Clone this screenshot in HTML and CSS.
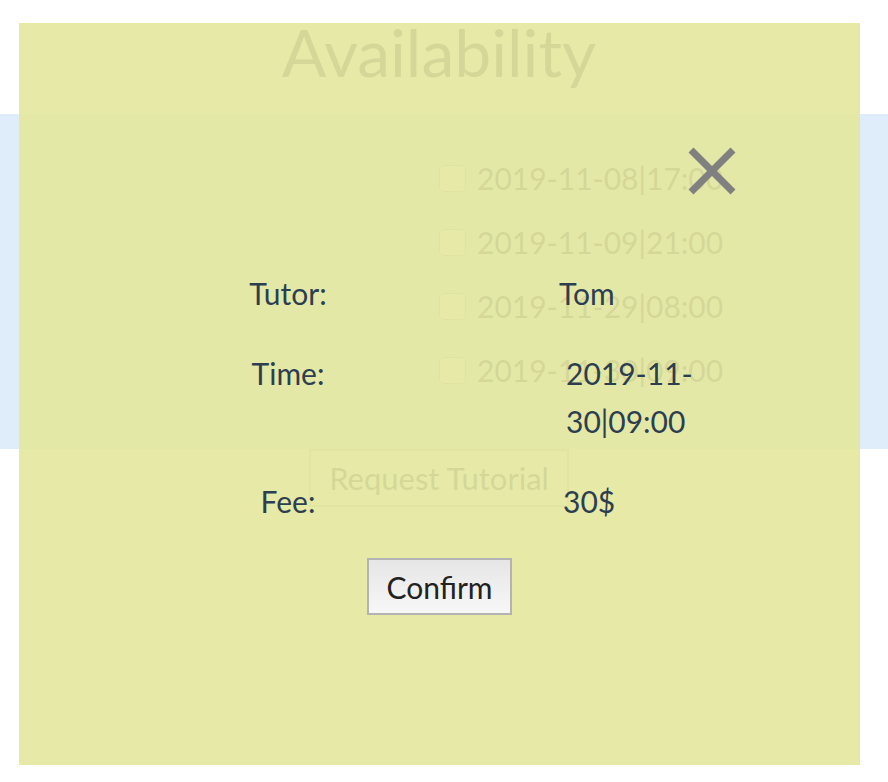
FILE: index.html
```html
<!DOCTYPE html>
<html lang="en">
<head>
  <meta charset="UTF-8">
  <title>Availability</title>
  <link rel="stylesheet" href="styles.css">
</head>
<body>
  <div id="app">
    <h1 class="page-title">Availability</h1>

    <div class="slots-band">
      <div class="slots-spacer"></div>
      <ul class="slot-list">
        <li class="slot"><span class="slot-box"></span>2019-11-08|17:00</li>
        <li class="slot"><span class="slot-box"></span>2019-11-09|21:00</li>
        <li class="slot"><span class="slot-box"></span>2019-11-29|08:00</li>
        <li class="slot"><span class="slot-box"></span>2019-11-30|09:00</li>
      </ul>
    </div>

    <div class="request-row">
      <button class="request-btn">Request Tutorial</button>
    </div>
  </div>

  <!-- Confirmation modal -->
  <div class="modal">
    <button class="modal-close" aria-label="Close">
      <svg width="50" height="50" viewBox="0 0 50 50">
        <path d="M4 4 L46 46 M46 4 L4 46" stroke="#808080" stroke-width="7" fill="none"/>
      </svg>
    </button>

    <div class="summary">
      <div class="summary-label">Tutor:</div>
      <div class="summary-value">Tom</div>

      <div class="summary-label">Time:</div>
      <div class="summary-value value-time">2019-11-30|09:00</div>

      <div class="summary-label">Fee:</div>
      <div class="summary-value value-fee">30$</div>
    </div>

    <div class="confirm-row">
      <button class="confirm-btn">Confirm</button>
    </div>
  </div>
</body>
</html>
```

FILE: styles.css
```css
:root {
  --text-color: #2c3e50;
  --band-bg: #dfecfa;
  --overlay: rgba(229, 231, 158, 0.91);
}

body {
  margin: 0;
  font-family: Lato, 'Open Sans', sans-serif;
  color: var(--text-color);
  background: #ffffff;
}

/* Page behind the modal */
.page-title {
  margin: 0;
  height: 114px;
  padding-top: 17px;
  box-sizing: border-box;
  font-size: 66px;
  font-weight: 400;
  line-height: 70px;
  text-align: center;
  padding-right: 10px;
}

.slots-band {
  display: grid;
  grid-template-columns: 439px 1fr;
  background: var(--band-bg);
  height: 335px;
  padding-top: 32px;
  box-sizing: border-box;
}

.slot-list {
  list-style: none;
  margin: 0;
  padding: 0;
}

.slot {
  display: flex;
  align-items: center;
  gap: 11px;
  height: 64px;
  font-size: 30px;
}

.slot-box {
  width: 25px;
  height: 25px;
  border: 1px solid #aab6c2;
  border-radius: 5px;
  background: #ffffff;
}

.request-row {
  display: flex;
  padding-left: 309px;
}

.request-btn {
  width: 260px;
  height: 58px;
  background: #ffffff;
  border: 2px solid #c9ccb0;
  font-family: inherit;
  font-size: 31px;
  color: var(--text-color);
}

/* Modal */
.modal {
  position: absolute;
  left: 19px;
  top: 23px;
  width: 841px;
  height: 742px;
  background: var(--overlay);
}

.modal-close {
  position: absolute;
  left: 668px;
  top: 123px;
  padding: 0;
  border: none;
  background: none;
}

.modal-close svg {
  display: block;
}

.summary {
  display: grid;
  grid-template-columns: 200px 150px;
  column-gap: 171px;
  row-gap: 32px;
  margin: 246px 0 0 169px;
  font-size: 30px;
  line-height: 48px;
}

.summary-label {
  text-align: center;
}

.value-time {
  padding-left: 7px;
}

.value-fee {
  padding-left: 4px;
}

.confirm-row {
  display: flex;
  justify-content: center;
  margin-top: 33px;
}

.confirm-btn {
  width: 145px;
  height: 57px;
  border: 2px solid #b3b3b3;
  background: linear-gradient(#e6e6e6, #f7f7f7);
  font-family: inherit;
  font-size: 30px;
  color: #222222;
}
```
